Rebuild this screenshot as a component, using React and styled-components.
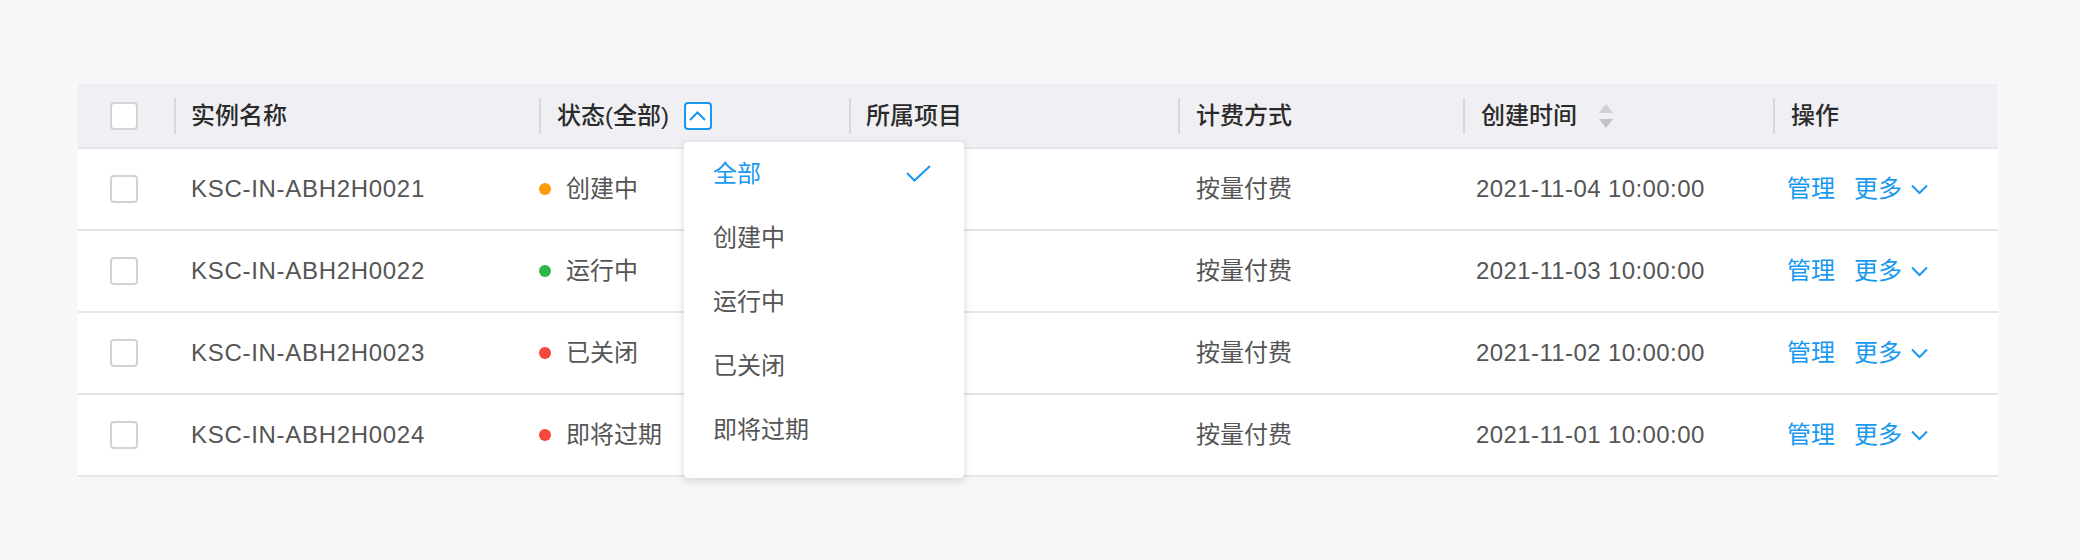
import React from "react";
import styled, { createGlobalStyle } from "styled-components";

const GlobalStyle = createGlobalStyle`
  html, body { margin: 0; padding: 0; background: #f7f7f9; }
  body { font-family: "Liberation Sans", "Noto Sans CJK SC", sans-serif; }
  * { box-sizing: border-box; }
`;

const BLUE = "#1898ef";
const COLS = "96px 365px 310px 329px 285px 310px 225px";

const Page = styled.div`
  padding: 84px 0 0 78px;
  width: 2080px;
  height: 560px;
`;

const Table = styled.div`
  width: 1920px;
  background: #fff;
`;

const HeaderRow = styled.div`
  display: grid;
  grid-template-columns: ${COLS};
  height: 65px;
  background: #f0f0f4;
  border-top: 1px solid #e9e9ee;
  border-bottom: 2px solid #e6e6ea;
`;

const HeadCell = styled.div`
  position: relative;
  display: flex;
  align-items: center;
  padding-left: ${(p) => p.$pad ?? 18}px;
  font-size: 24px;
  font-weight: 500;
  color: #2b2b2b;
  line-height: 1;
  ${(p) =>
    p.$divider &&
    `
    &::before {
      content: "";
      position: absolute;
      left: 0;
      top: 13px;
      width: 2px;
      height: 36px;
      background: #d7d7db;
    }
  `}
`;

const BodyRow = styled.div`
  display: grid;
  grid-template-columns: ${COLS};
  height: 82px;
  border-bottom: 2px solid #e6e6e8;
`;

const Cell = styled.div`
  display: flex;
  align-items: center;
  padding-left: ${(p) => p.$pad ?? 17}px;
  font-size: 24px;
  color: #555;
  line-height: 1;
  letter-spacing: ${(p) => p.$ls ?? 0}px;
`;

const CheckCell = styled.div`
  display: flex;
  align-items: center;
  padding-left: 32px;
`;

const Checkbox = styled.span`
  display: block;
  width: 28px;
  height: 28px;
  border: 2px solid #d2d2d4;
  border-radius: 4px;
  background: #fff;
`;

const Dot = styled.span`
  display: inline-block;
  width: 12px;
  height: 12px;
  border-radius: 50%;
  background: ${(p) => p.$color};
  margin-right: 15px;
`;

const FilterWrap = styled.span`
  position: relative;
  margin-left: 15px;
  display: inline-flex;
`;

const FilterBox = styled.span`
  display: flex;
  align-items: center;
  justify-content: center;
  width: 28px;
  height: 28px;
  border: 2px solid ${BLUE};
  border-radius: 4px;
  background: #fff;
`;

const Menu = styled.div`
  position: absolute;
  left: 0;
  top: 40px;
  width: 280px;
  padding: 0 0 16px;
  background: #fff;
  border-radius: 4px;
  box-shadow: 0 2px 10px rgba(0, 0, 0, 0.16);
  z-index: 10;
`;

const MenuItem = styled.div`
  display: flex;
  align-items: center;
  justify-content: space-between;
  height: 64px;
  padding: 0 33px 0 29px;
  font-size: 24px;
  font-weight: 400;
  color: ${(p) => (p.$active ? BLUE : "#555")};
`;

const SortIcon = styled.svg`
  margin-left: 21px;
`;

const Link = styled.span`
  color: ${BLUE};
  display: inline-flex;
  align-items: center;
  margin-right: ${(p) => p.$mr ?? 0}px;
`;

const ChevronDown = styled.svg`
  margin-left: 9px;
`;

const rows = [
  { name: "KSC-IN-ABH2H0021", status: "创建中", color: "#fb9c0c", time: "2021-11-04 10:00:00" },
  { name: "KSC-IN-ABH2H0022", status: "运行中", color: "#2eb84a", time: "2021-11-03 10:00:00" },
  { name: "KSC-IN-ABH2H0023", status: "已关闭", color: "#f5473a", time: "2021-11-02 10:00:00" },
  { name: "KSC-IN-ABH2H0024", status: "即将过期", color: "#f5473a", time: "2021-11-01 10:00:00" },
];

const options = ["全部", "创建中", "运行中", "已关闭", "即将过期"];

export default function App() {
  return (
    <>
      <GlobalStyle />
      <Page>
        <Table>
          <HeaderRow>
            <CheckCell>
              <Checkbox />
            </CheckCell>
            <HeadCell $divider $pad={17}>实例名称</HeadCell>
            <HeadCell $divider>
              状态(全部)
              <FilterWrap>
                <FilterBox>
                  <svg width="17" height="10" viewBox="0 0 17 10">
                    <polyline points="1,9 8.5,1.5 16,9" fill="none" stroke={BLUE} strokeWidth="2" />
                  </svg>
                </FilterBox>
                <Menu>
                  {options.map((o, i) => (
                    <MenuItem key={o} $active={i === 0}>
                      {o}
                      {i === 0 && (
                        <svg width="25" height="18" viewBox="0 0 25 18">
                          <polyline points="1,8 8.5,15.5 24,1" fill="none" stroke={BLUE} strokeWidth="2" />
                        </svg>
                      )}
                    </MenuItem>
                  ))}
                </Menu>
              </FilterWrap>
            </HeadCell>
            <HeadCell $divider $pad={17}>所属项目</HeadCell>
            <HeadCell $divider>计费方式</HeadCell>
            <HeadCell $divider>
              创建时间
              <SortIcon width="16" height="26" viewBox="0 0 16 26">
                <polygon points="8,1 15,10 1,10" fill="#d0d0d2" />
                <polygon points="1,16 15,16 8,25" fill="#c3c3c5" />
              </SortIcon>
            </HeadCell>
            <HeadCell $divider>操作</HeadCell>
          </HeaderRow>
          {rows.map((r) => (
            <BodyRow key={r.name}>
              <CheckCell>
                <Checkbox />
              </CheckCell>
              <Cell $ls={0.7}>{r.name}</Cell>
              <Cell $pad={0}>
                <Dot $color={r.color} />
                {r.status}
              </Cell>
              <Cell />
              <Cell $pad={18}>按量付费</Cell>
              <Cell $pad={13} $ls={0.4}>{r.time}</Cell>
              <Cell $pad={14}>
                <Link $mr={19}>管理</Link>
                <Link>
                  更多
                  <ChevronDown width="17" height="11" viewBox="0 0 17 11">
                    <polyline points="1,1.5 8.5,9 16,1.5" fill="none" stroke={BLUE} strokeWidth="2" />
                  </ChevronDown>
                </Link>
              </Cell>
            </BodyRow>
          ))}
        </Table>
      </Page>
    </>
  );
}
